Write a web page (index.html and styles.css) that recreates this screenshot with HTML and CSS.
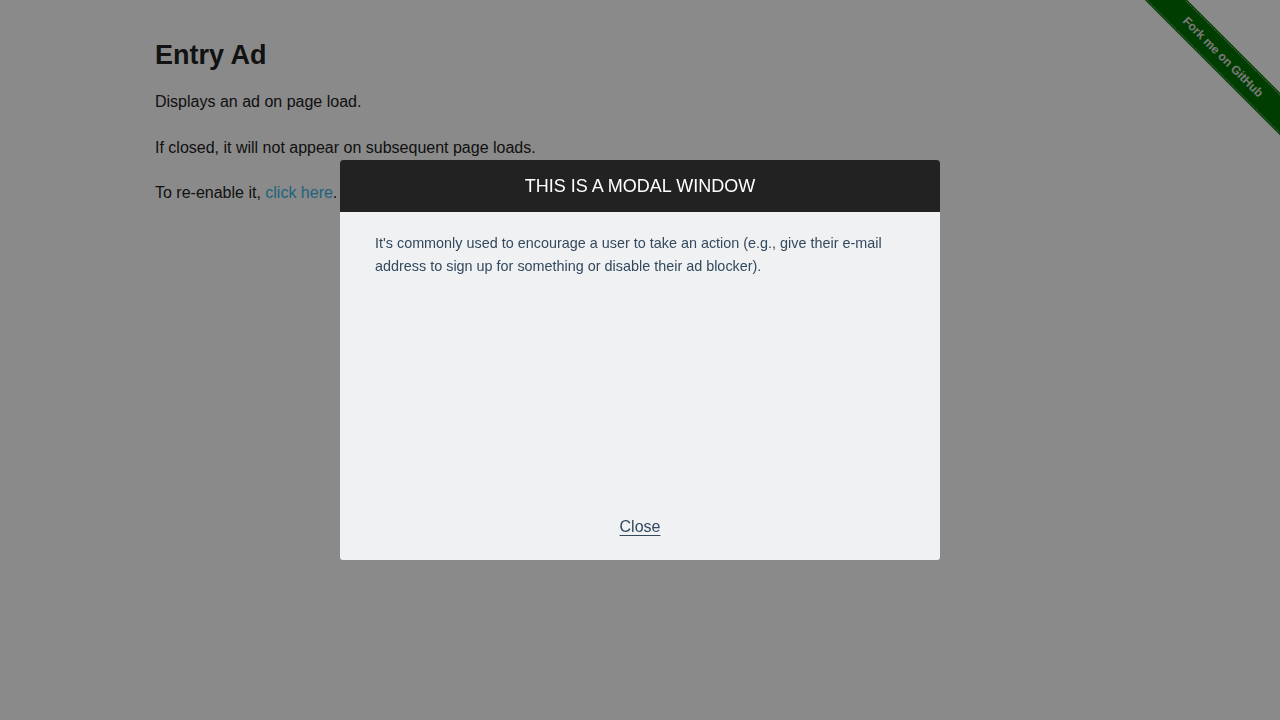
FILE: index.html
```html
<!DOCTYPE html>
<html>
<head>
<meta charset="utf-8">
<link rel="stylesheet" href="styles.css">
</head>
<body>
<a class="ribbon" href="#"><span>Fork me on GitHub</span></a>
<div class="page">
  <h3 class="title">Entry Ad</h3>
  <p>Displays an ad on page load.</p>
  <p>If closed, it will not appear on subsequent page loads.</p>
  <p>To re-enable it, <a class="link" href="#">click here</a>.</p>
</div>
<div class="overlay">
  <div class="modal">
    <div class="modal-title">This is a modal window</div>
    <div class="modal-body">
      <p>It's commonly used to encourage a user to take an action (e.g., give their e-mail address to sign up for something or disable their ad blocker).</p>
    </div>
    <div class="modal-footer"><a class="close" href="#">Close</a></div>
  </div>
</div>
</body>
</html>
```
FILE: styles.css
```css
html, body {
  margin: 0;
  padding: 0;
  background: #fff;
  font-family: "Liberation Sans", Arial, sans-serif;
  color: #222;
}
.page {
  width: 970px;
  margin: 0 auto;
  padding-top: 38px;
}
.title {
  font-size: 27px;
  font-weight: bold;
  margin: 0 0 18px 0;
  line-height: 34px;
}
.page p {
  font-size: 16px;
  line-height: 24px;
  margin: 0 0 21.5px 0;
}
.link {
  color: #3ab9e6;
  text-decoration: none;
}
.ribbon {
  position: absolute;
  top: 0;
  right: 0;
  width: 149px;
  height: 149px;
  overflow: hidden;
  text-decoration: none;
}
.ribbon span {
  position: absolute;
  top: 43px;
  right: -58px;
  width: 230px;
  transform: rotate(45deg);
  background: #007200;
  color: #e0e0e0;
  font-family: "Liberation Sans Narrow", "Liberation Sans", sans-serif;
  font-size: 12px;
  font-weight: bold;
  text-align: center;
  line-height: 22px;
  padding: 2px 0;
  border-top: 1px dotted #9fd09f;
  border-bottom: 1px dotted #9fd09f;
  box-shadow: 0 0 0 1px #007200;
}
.overlay {
  position: fixed;
  inset: 0;
  background: rgba(0, 0, 0, 0.46);
  display: flex;
  justify-content: center;
  align-items: flex-start;
  padding-top: 160px;
}
.modal {
  width: 600px;
  height: 400px;
  background: #eff1f3;
  border-radius: 3px;
  overflow: hidden;
  display: flex;
  flex-direction: column;
}
.modal-title {
  background: #222;
  color: #fff;
  height: 52px;
  line-height: 52px;
  text-align: center;
  font-size: 18px;
  text-transform: uppercase;
}
.modal-body {
  flex: 1;
  padding: 20px 35px 0 35px;
}
.modal-body p {
  margin: 0;
  font-size: 14.4px;
  line-height: 23px;
  color: #34495e;
}
.modal-footer {
  text-align: center;
  height: 45px;
}
.close {
  color: #34495e;
  font-size: 16px;
  line-height: 24px;
  text-decoration: underline;
  text-underline-offset: 3px;
}
```
